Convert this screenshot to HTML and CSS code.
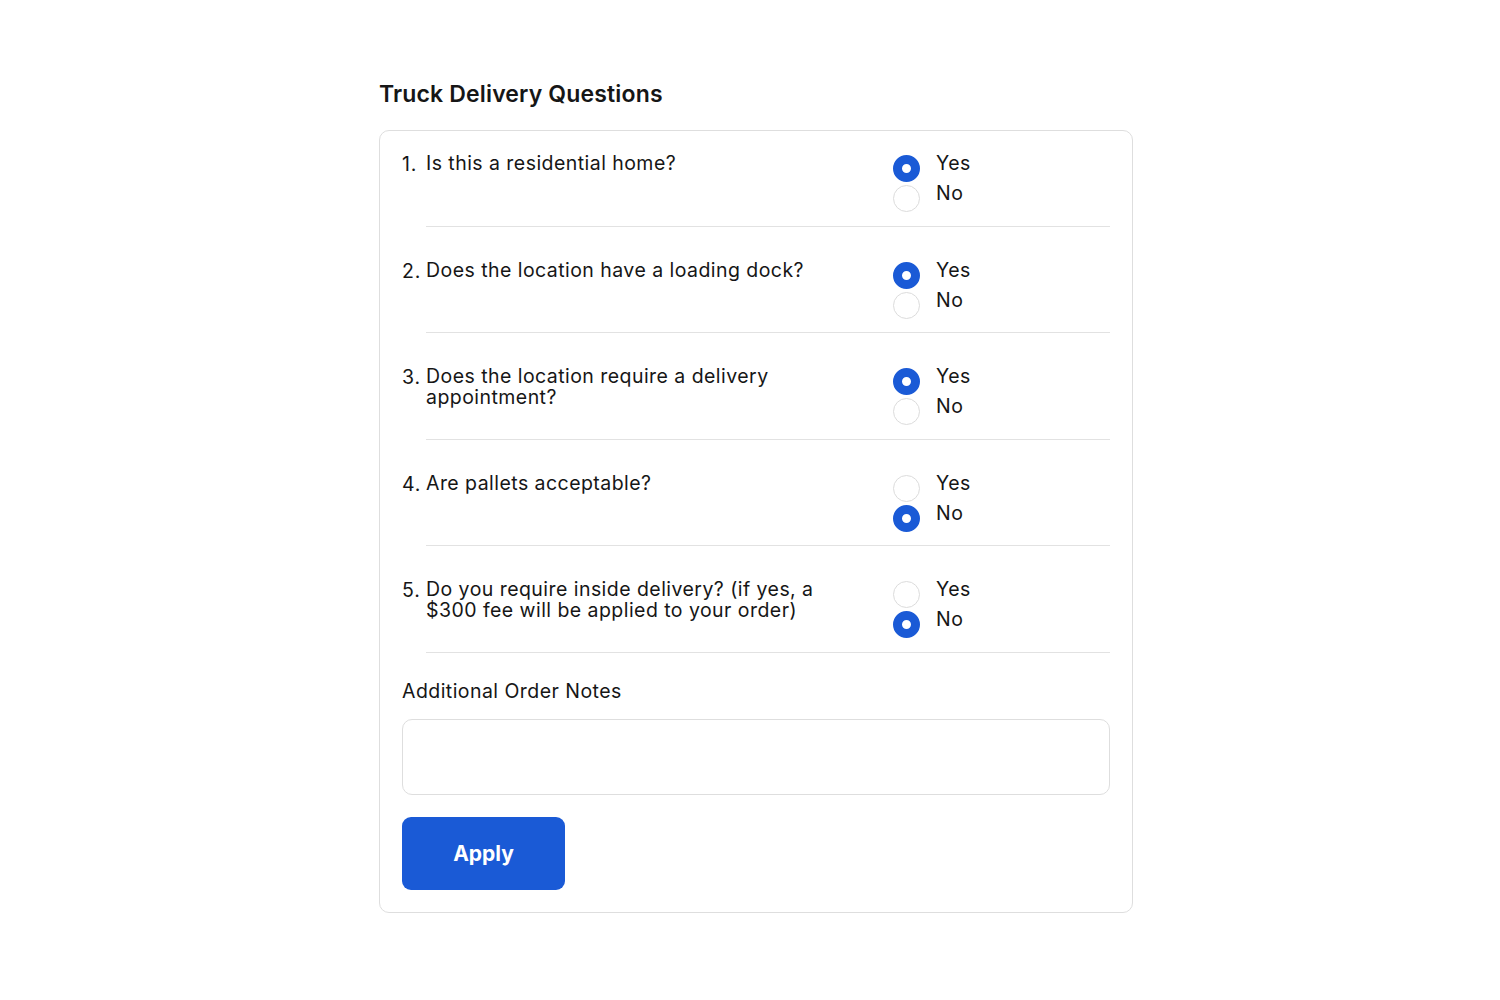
FILE: index.html
```html
<!DOCTYPE html>
<html lang="en">
<head>
  <meta charset="UTF-8" />
  <meta name="viewport" content="width=device-width, initial-scale=1.0" />
  <title>Truck Delivery Questions</title>
  <link rel="stylesheet" href="styles.css">
</head>
<body>
  <div class="wrap">
    <h2>Truck Delivery Questions</h2>
    <form class="card">
      <!-- question rows -->
      <div class="row">
        <span class="num">1.</span>
        <div class="body">
          <div class="question">Is this a residential home?</div>
          <div class="options">
            <label class="option"><input type="radio" name="q1" checked><span class="dot"></span>Yes</label>
            <label class="option"><input type="radio" name="q1"><span class="dot"></span>No</label>
          </div>
        </div>
      </div>

      <div class="row">
        <span class="num">2.</span>
        <div class="body">
          <div class="question">Does the location have a loading dock?</div>
          <div class="options">
            <label class="option"><input type="radio" name="q2" checked><span class="dot"></span>Yes</label>
            <label class="option"><input type="radio" name="q2"><span class="dot"></span>No</label>
          </div>
        </div>
      </div>

      <div class="row">
        <span class="num">3.</span>
        <div class="body">
          <div class="question">Does the location require a delivery appointment?</div>
          <div class="options">
            <label class="option"><input type="radio" name="q3" checked><span class="dot"></span>Yes</label>
            <label class="option"><input type="radio" name="q3"><span class="dot"></span>No</label>
          </div>
        </div>
      </div>

      <div class="row">
        <span class="num">4.</span>
        <div class="body">
          <div class="question">Are pallets acceptable?</div>
          <div class="options">
            <label class="option"><input type="radio" name="q4"><span class="dot"></span>Yes</label>
            <label class="option"><input type="radio" name="q4" checked><span class="dot"></span>No</label>
          </div>
        </div>
      </div>

      <div class="row">
        <span class="num">5.</span>
        <div class="body">
          <div class="question">Do you require inside delivery? (if yes, a $300 fee will be applied to your order)</div>
          <div class="options">
            <label class="option"><input type="radio" name="q5"><span class="dot"></span>Yes</label>
            <label class="option"><input type="radio" name="q5" checked><span class="dot"></span>No</label>
          </div>
        </div>
      </div>

      <label class="notes-label" for="notes">Additional Order Notes</label>
      <textarea id="notes" class="notes"></textarea>
      <button type="submit" class="apply">Apply</button>
    </form>
  </div>
</body>
</html>
```

FILE: styles.css
```css
body {
  margin: 0;
  background: #fff;
  font-family: Inter, "Noto Sans", Arial, sans-serif;
  color: #161616;
}
.wrap {
  width: 754px;
  margin: 0 auto;
  padding-top: 79px;
  transform: translateX(6px);
}
h2 {
  font-size: 23px;
  font-weight: 600;
  margin: 0 0 21px;
  line-height: 30px;
  letter-spacing: 0.15px;
}
.card {
  border: 1px solid #dedede;
  border-radius: 10px;
  padding: 17px 22px 22px;
  display: flex;
  flex-direction: column;
  align-items: flex-start;
}
.row {
  display: flex;
  width: 100%;
  font-size: 19.5px;
  letter-spacing: 0.45px;
}
.num {
  width: 24px;
  flex-shrink: 0;
  padding-top: 28px;
  line-height: 22px;
  margin-top: 5px;
  letter-spacing: 0.8px;
}
.row:first-child .num,
.row:first-child .body {
  padding-top: 0;
}
.body {
  flex: 1;
  display: grid;
  grid-template-columns: 467px 1fr;
  padding: 28px 0 17.5px;
  border-bottom: 1px solid #e2e2e2;
}
.question {
  line-height: 21px;
  margin-top: 5px;
  padding-right: 40px;
}
.options {
  display: flex;
  flex-direction: column;
}
.option {
  display: flex;
  align-items: center;
  height: 30px;
  gap: 16px;
  cursor: pointer;
}
.option input {
  display: none;
}
.dot {
  width: 27px;
  height: 27px;
  box-sizing: border-box;
  border-radius: 50%;
  border: 1.5px solid #dcdcdc;
  background: #fff;
  margin-top: 11px;
}
.option input:checked + .dot {
  border: 9px solid #1a5ad6;
}
.notes-label {
  font-size: 19.5px;
  letter-spacing: 0.45px;
  margin-top: 26px;
  line-height: 24px;
}
.notes {
  width: 100%;
  height: 76px;
  box-sizing: border-box;
  margin-top: 16px;
  border: 1.5px solid #dedede;
  border-radius: 10px;
  resize: none;
  font-family: inherit;
  font-size: 18px;
  padding: 10px 14px;
}
.apply {
  margin-top: 22px;
  width: 163px;
  height: 73px;
  border: none;
  border-radius: 9px;
  background: #1a5ad6;
  color: #fff;
  font-family: inherit;
  font-size: 21px;
  font-weight: 700;
  cursor: pointer;
}
```
